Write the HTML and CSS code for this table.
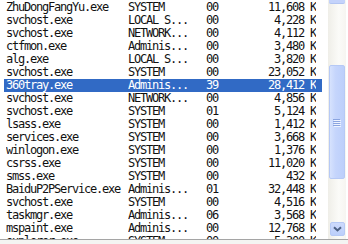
FILE: index.html
```html
<!DOCTYPE html>
<html>
<head>
<meta charset="utf-8">
<link rel="stylesheet" href="styles.css">
</head>
<body>
<div class="frame">
  <div class="pane">
    <div class="list">
      <div class="row"><span>ZhuDongFangYu.exe</span><span>SYSTEM</span><span>00</span><span class="mem">11,608 K</span></div>
      <div class="row"><span>svchost.exe</span><span>LOCAL S...</span><span>00</span><span class="mem">4,228 K</span></div>
      <div class="row"><span>svchost.exe</span><span>NETWORK...</span><span>00</span><span class="mem">4,112 K</span></div>
      <div class="row"><span>ctfmon.exe</span><span>Adminis...</span><span>00</span><span class="mem">3,480 K</span></div>
      <div class="row"><span>alg.exe</span><span>LOCAL S...</span><span>00</span><span class="mem">3,820 K</span></div>
      <div class="row"><span>svchost.exe</span><span>SYSTEM</span><span>00</span><span class="mem">23,052 K</span></div>
      <div class="row selected"><span>360tray.exe</span><span>Adminis...</span><span>39</span><span class="mem">28,412 K</span></div>
      <div class="row"><span>svchost.exe</span><span>NETWORK...</span><span>00</span><span class="mem">4,856 K</span></div>
      <div class="row"><span>svchost.exe</span><span>SYSTEM</span><span>01</span><span class="mem">5,124 K</span></div>
      <div class="row"><span>lsass.exe</span><span>SYSTEM</span><span>00</span><span class="mem">1,412 K</span></div>
      <div class="row"><span>services.exe</span><span>SYSTEM</span><span>00</span><span class="mem">3,668 K</span></div>
      <div class="row"><span>winlogon.exe</span><span>SYSTEM</span><span>00</span><span class="mem">1,376 K</span></div>
      <div class="row"><span>csrss.exe</span><span>SYSTEM</span><span>00</span><span class="mem">11,020 K</span></div>
      <div class="row"><span>smss.exe</span><span>SYSTEM</span><span>00</span><span class="mem">432 K</span></div>
      <div class="row"><span>BaiduP2PService.exe</span><span>Adminis...</span><span>01</span><span class="mem">32,448 K</span></div>
      <div class="row"><span>svchost.exe</span><span>SYSTEM</span><span>00</span><span class="mem">4,516 K</span></div>
      <div class="row"><span>taskmgr.exe</span><span>Adminis...</span><span>06</span><span class="mem">3,568 K</span></div>
      <div class="row"><span>mspaint.exe</span><span>Adminis...</span><span>00</span><span class="mem">12,768 K</span></div>
      <div class="row"><span>explorer.exe</span><span>SYSTEM</span><span>00</span><span class="mem">5,300 K</span></div>
    </div>
    <div class="vscroll">
      <div class="btn-up"></div>
      <div class="track">
        <div class="thumb">
          <svg class="grip" width="8" height="8" viewBox="0 0 8 8">
            <path d="M0 0.5H7M0 2.5H7M0 4.5H7M0 6.5H7" stroke="#8aa4e0" stroke-width="1"/>
            <path d="M1 1.5H8M1 3.5H8M1 5.5H8M1 7.5H8" stroke="#eef3ff" stroke-width="1"/>
          </svg>
        </div>
      </div>
      <div class="btn-down">
        <svg width="9" height="6" viewBox="0 0 9 6">
          <path d="M1 1.2L4.5 4.5L8 1.2" fill="none" stroke="#4d6185" stroke-width="2"/>
        </svg>
      </div>
    </div>
  </div>
</div>
</body>
</html>
```

FILE: styles.css
```css
html, body {
  margin: 0;
  padding: 0;
  background: #f3f3f3;
}

.frame {
  width: 348px;
  height: 244px;
  overflow: hidden;
  background: #f4f4f2;
}

.pane {
  display: flex;
  height: 239px;
  background: #ffffff;
  border-bottom: 1px solid #a5a5a5;
  overflow: hidden;
}

.list {
  width: 328px;
  padding-top: 1px;
  overflow: hidden;
  font-family: "DejaVu Sans Mono", "Liberation Mono", monospace;
  font-size: 12px;
  letter-spacing: -1.22px;
  color: #111;
}

.row {
  display: grid;
  grid-template-columns: 122px 78px 40px 70px;
  box-sizing: border-box;
  width: 318px;
  height: 13px;
  line-height: 13px;
  margin-left: 4px;
  padding: 0 5px 0 2px;
  white-space: nowrap;
}

.row span {
  overflow: hidden;
}

.row .mem {
  text-align: right;
}

.row.selected {
  background: #316ac5;
  color: #ffffff;
}

.vscroll {
  width: 18px;
  display: flex;
  flex-direction: column;
  background: linear-gradient(to right, #efeee8, #fbfbf8 60%, #f6f5f1);
}

.btn-up {
  height: 3px;
  margin: 0 1px 0 1px;
  background: #c4d3fb;
  border-bottom: 1px solid #b2c5f2;
  border-radius: 0 0 2px 2px;
}

.track {
  flex: 1;
  padding-top: 61px;
}

.thumb {
  height: 112px;
  margin: 0 1px 0 1px;
  border: 1px solid #b6c9f5;
  border-radius: 2px;
  background: linear-gradient(to right, #d6e2fd, #c5d5fc 40%, #bccffb);
  display: flex;
  align-items: center;
  justify-content: center;
}

.grip {
  display: block;
  margin-top: 2px;
}

.btn-down {
  height: 12px;
  margin: 0 1px 3px 2px;
  border: 1px solid #b6c9f5;
  border-radius: 2px;
  background: linear-gradient(to bottom, #cddafc, #bccffb);
  display: flex;
  align-items: center;
  justify-content: center;
}

.btn-down svg {
  display: block;
}
```
